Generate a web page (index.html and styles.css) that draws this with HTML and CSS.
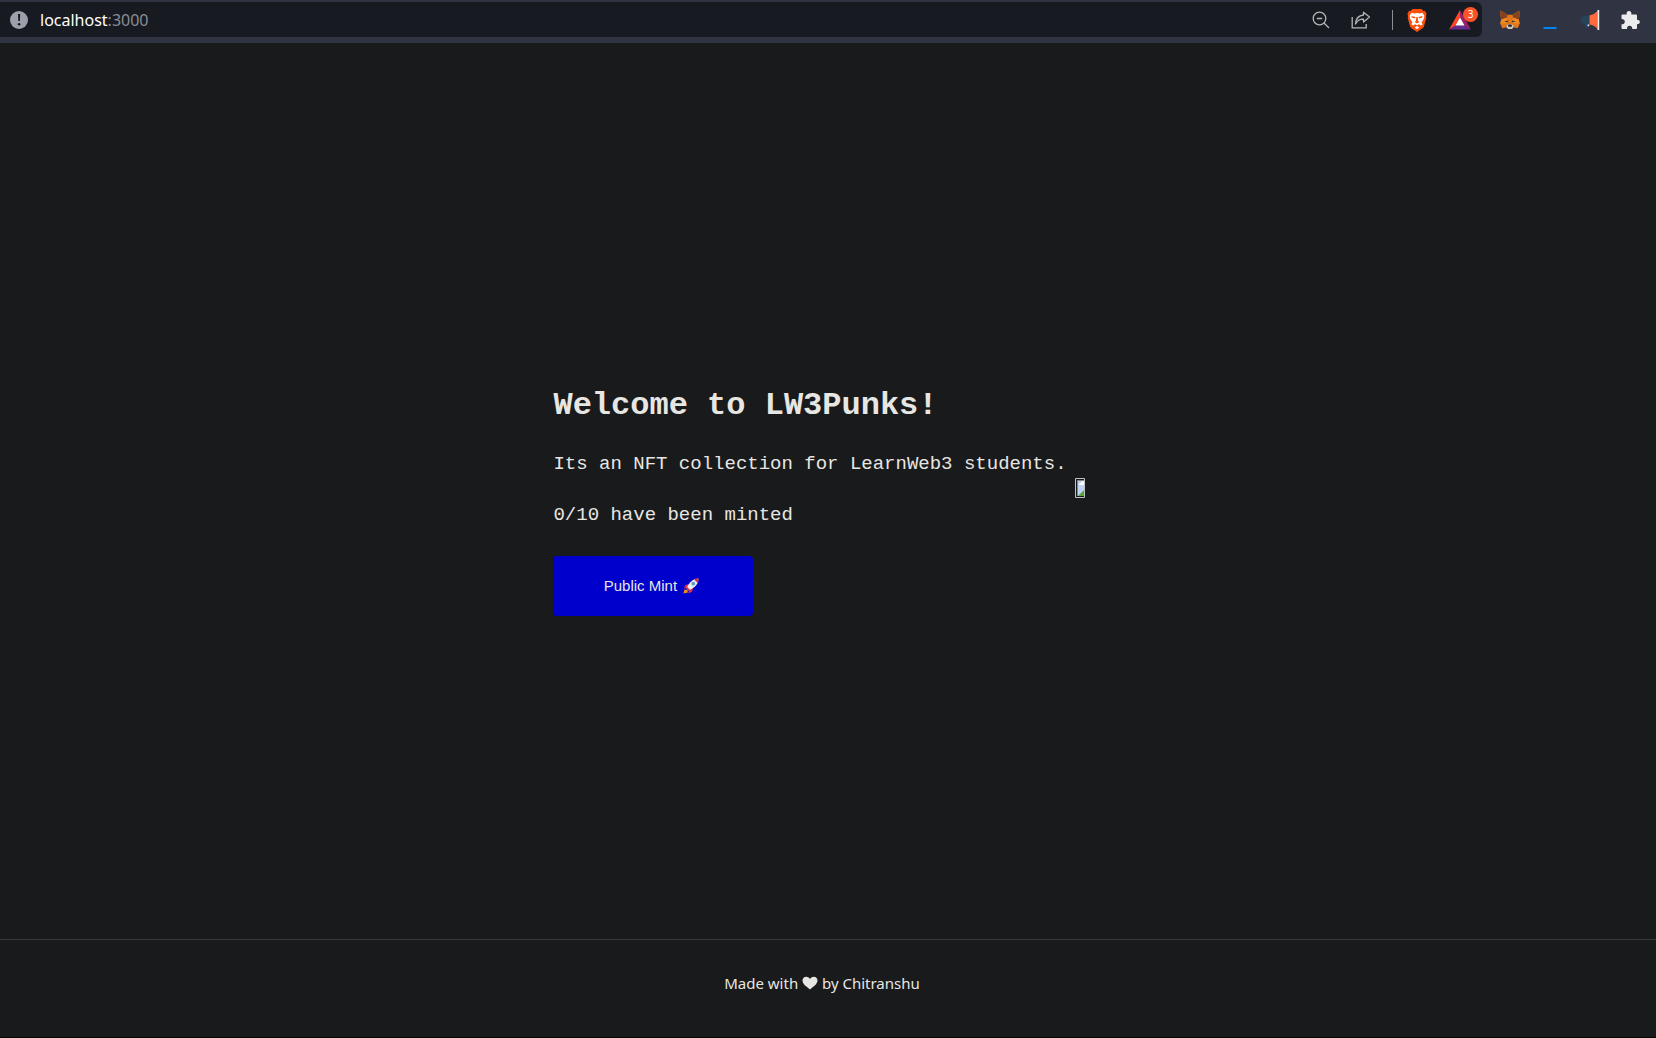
FILE: index.html
```html
<!DOCTYPE html>
<html lang="en">
<head>
<meta charset="utf-8">
<meta name="viewport" content="width=device-width, initial-scale=1">
<title>LW3Punks</title>
<link rel="stylesheet" href="styles.css">
</head>
<body>
<header class="toolbar">
  <div class="address">
    <button class="tool site-info" type="button" aria-label="Site information">
      <svg width="18" height="18" viewBox="0 0 18 18"><circle cx="9" cy="9" r="9" fill="#9da0aa"/><path d="M8 3h2.200l-.3 7H8.300z" fill="#171a21"/><circle cx="9.100" cy="13.200" r="1.300" fill="#171a21"/></svg>
    </button>
    <span class="url">localhost<span class="port">:3000</span></span>
    <button class="tool" type="button" aria-label="Zoom out">
      <svg width="18" height="18" viewBox="0 0 18 18" fill="none" stroke="#b4b5b9" stroke-width="1.300"><circle cx="7.500" cy="7.500" r="6.300"/><path d="M4.800 7.500h5.400M12 12l5 5"/></svg>
    </button>
    <button class="tool" type="button" aria-label="Share">
      <svg width="20" height="18" viewBox="0 0 20 18" fill="none" stroke="#b4b5b9" stroke-width="1.300"><path d="M1.200 6v10.800h14V13"/><path d="M12.500 1.200 18.500 6l-6 5V8.200C9 8 6.500 9.500 4.500 13c.3-5 3-8.500 8-9z" stroke-linejoin="round"/></svg>
    </button>
    <span class="divider"></span>
    <button class="tool" type="button" aria-label="Brave Shields">
      <svg width="20" height="24" viewBox="0 0 20 24"><path d="M5.500 1h9l1.800 2 1.700-.2L19.600 6l-.7 2.300.5 1.200-2.300 8.500q-.4 1.400-1.600 2.200L10 24l-5.500-3.800q-1.200-.8-1.600-2.200L.6 9.500l.5-1.200L.4 6 2 2.800l1.700.2z" fill="#fb4f0b"/><path d="m4.600 4.800 2.900.6L10 4.900l2.500.5 2.900-.6 2 2.900-.6 3.300-2.200 3.200 1 2.100-1.500 1.300-2.300-1.400-1.800 1.100-1.800-1.100-2.300 1.400-1.500-1.300 1-2.100L3.200 11l-.6-3.300zM10 18l2.300 1.500L10 21.300l-2.300-1.800z" fill="#fff"/><path d="m4.500 8 4 1-.5 1.400-3.200-1zM15.500 8l-4 1 .5 1.400 3.200-1zM9.300 9h1.400l.4 4 1.200 1-2.300 1.600L7.700 14l1.200-1z" fill="#fb4f0b"/></svg>
    </button>
    <button class="tool rewards" type="button" aria-label="Brave Rewards, 3 notifications">
      <svg width="22" height="20" viewBox="0 0 22 20"><path d="M11 0 0 19.500l7.300-4.200L11 8z" fill="#ff4724"/><path d="m11 0 11 19.500-7.300-4.200L11 8z" fill="#9e1f63"/><path d="m0 19.500 7.300-4.200h7.400l7.300 4.200z" fill="#662d91"/><path d="m11 7.500 4.500 8h-9z" fill="#fff"/></svg>
      <span class="badge">3</span>
    </button>
  </div>
  <nav class="extensions" aria-label="Extensions">
    <button class="tool" type="button" aria-label="MetaMask">
      <svg width="20" height="20" viewBox="0 0 20 20"><path d="m.7.500 7 4.300h4.600l7-4.300.5 4-1 5 .9 4.200-2 4.600-4.200-1L11.800 19H8.200l-1.700-1.700-4.200 1-2-4.600.9-4.200-1-5z" fill="#e2761b"/><path d="m.7.500 7 4.300-1 3L1.200 9.500l-1-5zM19.300.500l-7 4.300 1 3 5.500 1.700 1-5z" fill="#854320"/><path d="m1.200 9.500 5.500-1.700L8 13l-7.700.7zM18.800 9.500l-5.500-1.700L12 13l7.700.7z" fill="#f28a1e"/><path d="m4.500 11.500 3-1 .8 2zM15.500 11.500l-3-1-.8 2z" fill="#283244"/><path d="m6.500 15.500 2-1.200h3l2 1.200-.4 2.300-1.300 1.200H8.200l-1.300-1.200z" fill="#c9c7c3"/><path d="m8 15.500.8-1h2.400l.8 1-.4 1.300H8.400z" fill="#20222a"/></svg>
    </button>
    <button class="tool" type="button" aria-label="Downloads">
      <svg width="14" height="20" viewBox="0 0 14 20"><path d="M.500 17h13v2H.500z" fill="#0085f2"/></svg>
    </button>
    <button class="tool" type="button" aria-label="Announcements">
      <svg width="20" height="22" viewBox="0 0 20 22"><path d="M9.500 6v9.500l-1.500.2.500 3.300-2.700.5L4.500 15.500C2 15.500.500 14 .500 11.500S2 7 4.500 7z" fill="#26435a"/><path d="M9.500 6.500q5-1 8-4.500v18q-3-4-8-4.500z" fill="#ff6b3d"/><path d="M17.500 1h1.700v20h-1.700zM7.500 15.500h2l-.5 1.800H7.800z" fill="#edeeef"/></svg>
    </button>
    <button class="tool" type="button" aria-label="Manage extensions">
      <svg width="19" height="20" viewBox="0 0 19 20"><path d="M1.500 4.500h4.200C5.300 2.300 6.200 1 8 1s2.700 1.300 2.300 3.500H15q1 0 1 1v4.300c1.700 0 2.800.7 2.800 2.200s-1.100 2.200-2.800 2.200V18q0 1-1 1h-3.700c0-2-1-3.200-2.700-3.200S6 17 6 19H1.500q-1 0-1-1v-3.700c2.200 0 3.300-1 3.300-2.600S2.700 9 .500 9V5.500q0-1 1-1z" fill="#ececee"/></svg>
    </button>
  </nav>
</header>

<main class="main">
  <section class="intro">
    <h1 class="title">Welcome to LW3Punks!</h1>
    <p class="description">Its an NFT collection for LearnWeb3 students.</p>
    <p class="description">0/10 have been minted</p>
    <button class="mint" type="button">Public Mint
      <svg class="rocket" width="16" height="16" viewBox="0 0 16 16" aria-hidden="true"><path d="M6 6 2.500 7 .800 10.500 5 9.500zM10 10l-1 3.700-3.700 1.700 1.200-4.600z" fill="#dd2e44"/><path d="M1.500 11.500 4.500 12l.3 2.500L.500 15.500z" fill="#f4900c"/><path d="M15.500.500C10.500.500 6.500 3.500 3.500 10.500l2 2C12.500 9.500 15.500 5.500 15.500.500z" fill="#eceff4"/><path d="M15.500.500q-2.400 0-4.500 1l3.500 3.500q1-2 1-4.500zM4.200 9l2.800 2.800-1.700.9-2-2z" fill="#dd2e44"/><circle cx="10.300" cy="5.700" r="1.900" fill="#5c9fc9"/></svg>
    </button>
  </section>
  <svg class="picture" width="10" height="20" viewBox="0 0 10 20" role="img" aria-label="Collection preview"><path d="M.500.500h9v19h-9z" fill="none" stroke="#c0c0c0"/><path d="M2 2h7v16H2z" fill="#858585"/><path d="M3 3h6v15H3z" fill="#bfd3f3"/><path d="M4 7q0-2 2-2 0-2 3-2v4z" fill="#fff"/><path d="M3 18 9 12v6z" fill="#57a639"/></svg>
</main>

<footer class="footer">Made with
  <svg class="heart" width="16" height="14" viewBox="0 0 16 14" role="img" aria-label="love"><path d="M8 13.500C3 9.500.500 7.500.500 4.500.500 0 6-.500 8 3c2-3.500 7.500-3 7.500 1.500 0 3-2.500 5-7.500 9z" fill="#e8e6e3"/></svg>
  by Chitranshu</footer>
</body>
</html>
```
FILE: styles.css
```css
* {
  box-sizing: border-box;
}

body {
  display: flex;
  flex-direction: column;
  min-height: 100vh;
  margin: 0;
  border-bottom: 1px solid #050506;
  background: #181a1b;
  color: #e8e6e3;
  font-family: "Noto Sans", "Open Sans", sans-serif;
}

button {
  border: 0;
  font: inherit;
  cursor: pointer;
}

.toolbar {
  display: flex;
  height: 43px;
  padding: 2px 6px 6px 0;
  background: #303341;
}

.address {
  display: flex;
  flex: 1;
  align-items: center;
  border-radius: 0 6px 6px 0;
  background: #171a21;
}

.url {
  flex: 1;
  color: #ffffff;
  font-size: 16px;
  line-height: 24px;
}

.port {
  color: #8b8d93;
}

.tool {
  display: flex;
  align-items: center;
  justify-content: center;
  width: 40px;
  height: 35px;
  padding: 0;
  background: transparent;
}

.site-info {
  padding-right: 2px;
}

.divider {
  width: 1px;
  height: 20px;
  margin: 0 4px 0 11px;
  background: #8d8f94;
}

.rewards {
  position: relative;
  margin: 0 2px 0 3px;
}

.badge {
  position: absolute;
  top: 5px;
  right: 2px;
  width: 15px;
  height: 15px;
  border-radius: 8px;
  background: #ff5226;
  color: #ffffff;
  font-size: 10px;
  line-height: 15px;
}

.extensions {
  display: flex;
  padding-left: 8px;
}

.main {
  display: flex;
  flex: 1;
  align-items: center;
  justify-content: center;
  padding: 0 18px 6px 0;
}

.intro {
  padding: 27px 8px 0 0;
  font-family: "Liberation Mono", "Courier New", monospace;
}

.title {
  margin: 0 0 28px;
  font-size: 32px;
  line-height: 36px;
}

.description {
  margin: 0 0 27px;
  font-size: 19px;
  line-height: 24px;
}

.mint {
  display: flex;
  align-items: center;
  justify-content: center;
  gap: 6px;
  width: 200px;
  height: 60px;
  margin-top: 29px;
  padding: 0 4px 0 0;
  border-radius: 4px;
  background: #0000cc;
  color: #e8e6e3;
  font-family: "Liberation Sans", Arial, sans-serif;
  font-size: 15px;
}

.footer {
  padding: 32px 12px 43px 0;
  border-top: 1px solid #36393b;
  font-size: 15px;
  line-height: 22px;
  text-align: center;
}

.heart {
  vertical-align: -1px;
}
```
